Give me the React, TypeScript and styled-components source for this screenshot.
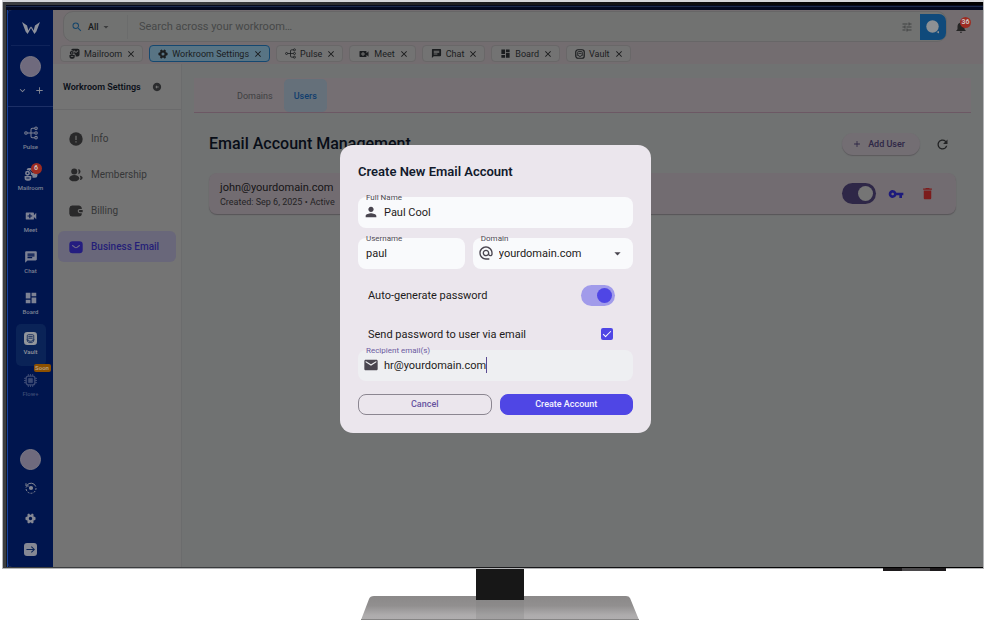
import React from "react";
import styled, { createGlobalStyle, css } from "styled-components";
import {
  MdSearch, MdArrowDropDown, MdTune, MdNotifications, MdClose, MdVideoCall, MdChat, MdDashboard,
  MdPerson, MdAlternateEmail, MdEmail, MdAdd, MdRefresh, MdVpnKey, MdDelete, MdKeyboardArrowDown,
  MdArrowCircleLeft,
} from "react-icons/md";

const GlobalStyle = createGlobalStyle`
  *, *::before, *::after { box-sizing: border-box; }
  body { margin: 0; background: #fff; font-family: Roboto, "Liberation Sans", sans-serif; }
  button, input, select { font-family: inherit; margin: 0; }
  button { cursor: pointer; border: 0; background: none; padding: 0; color: inherit; }
  svg { display: block; flex: none; }
  h1, h2, p { margin: 0; }
`;

/* ---------- icons ---------- */
type IconProps = { size: number };

const LogoMark = () => (
  <svg width="20" height="14" viewBox="0 0 20 14" fill="#8d919c">
    <path d="M1 1 L6 4.5 L7.4 9.6 L9.4 5.6 L10 7 L6.6 13 L4.6 10.4 Z" />
    <path d="M19 1 L14 4.5 L12.6 9.6 L10.6 5.6 L10 7 L13.4 13 L15.4 10.4 Z" />
  </svg>
);
const PulseIcon = ({ size }: IconProps) => (
  <svg width={size} height={size} viewBox="0 0 24 24" fill="none" stroke="currentColor" strokeWidth="1.8">
    <circle cx="3.4" cy="12" r="2.2" />
    <circle cx="20.6" cy="4" r="2.2" />
    <circle cx="20.6" cy="12" r="2.2" />
    <circle cx="20.6" cy="20" r="2.2" />
    <path d="M5.6 12H18.4M18.4 4H14.5Q12 4 12 6.5V17.5Q12 20 14.5 20H18.4" />
  </svg>
);
const MailroomIcon = ({ size }: IconProps) => (
  <svg width={size} height={size} viewBox="0 0 24 24" fill="currentColor">
    <path
      fillRule="evenodd"
      d="M8 1.500H19a4 4 0 0 1 4 4V14.500a4 4 0 0 1-4 4H14.500V16Q14.500 13.500 12 13.500H11.500Q13 8 7.500 5.500L4.500 5Q5 1.500 8 1.500ZM11 5L10 6.500L14 9.800Q15.300 10.800 16.600 9.800L20.500 6.500L19.500 5L15.800 8Q15.300 8.300 14.800 8Z"
    />
    <path fillRule="evenodd" d="M6 6.500A4.200 4.200 0 1 0 6 14.900A4.200 4.200 0 1 0 6 6.500ZM6 9.200A1.500 1.500 0 1 1 6 12.200A1.500 1.500 0 1 1 6 9.200Z" />
    <path fillRule="evenodd" d="M1 15.500H12.500V19a4.500 4.500 0 0 1-4.500 4.500H5.500A4.500 4.500 0 0 1 1 19ZM4 18V19.600H9.500V18Z" />
  </svg>
);
const GearIcon = ({ size }: IconProps) => (
  <svg width={size} height={size} viewBox="0 0 24 24" fill="currentColor" fillRule="evenodd">
    <path d="M7.500 1.500Q9.300 .8 10.300 3Q12 4.600 13.700 3Q14.700 .8 16.500 1.500L18.300 2.700Q19.600 4 18.300 6Q18 8 20.400 8.300Q22.800 8.300 23 10.300V13.700Q22.800 15.700 20.400 15.700Q18 16 18.300 18Q19.600 20 18.300 21.300L16.500 22.500Q14.700 23.200 13.700 21Q12 19.400 10.300 21Q9.300 23.200 7.500 22.500L5.700 21.300Q4.400 20 5.700 18Q6 16 3.600 15.700Q1.200 15.700 1 13.700V10.300Q1.200 8.300 3.600 8.300Q6 8 5.700 6Q4.400 4 5.700 2.700ZM12 8.300A3.700 3.700 0 1 0 12 15.700A3.700 3.700 0 1 0 12 8.300Z" />
  </svg>
);
const VaultIcon = ({ size }: IconProps) => (
  <svg width={size} height={size} viewBox="0 0 24 24" fill="none" stroke="currentColor" strokeWidth="2.8">
    <rect x="1.800" y="1.800" width="20.400" height="20.400" rx="5.500" />
    <path d="M6.500 14V8Q6.500 6 8.500 6H15.500Q17.500 6 17.500 8V14M8.500 10.500H15.500M4 14.800H8L9.500 17.500H14.500L16 14.800H20" strokeWidth="2" />
  </svg>
);
const VaultSolidIcon = ({ size }: IconProps) => (
  <svg width={size} height={size} viewBox="0 0 24 24" fill="none">
    <rect width="24" height="24" rx="6" fill="currentColor" />
    <path d="M6 14V7Q6 5 8 5H16Q18 5 18 7V14M8 8.500H16M8 11.500H16M4.500 14.500H8L9.500 17H14.500L16 14.500H19.500M6.500 15V17.500L9.500 19.500H14.500L17.500 17.500V15" stroke="#0a2355" strokeWidth="1.500" />
  </svg>
);
const ChipIcon = ({ size }: IconProps) => (
  <svg width={size} height={size} viewBox="0 0 24 24" fill="none" stroke="currentColor">
    <rect x="4" y="4" width="16" height="16" rx="4" strokeWidth="2.600" />
    <rect x="8" y="8" width="8" height="8" rx="1" fill="currentColor" />
    <path d="M8 0V4M12 0V4M16 0V4M8 20V24M12 20V24M16 20V24M0 8H4M0 12H4M0 16H4M20 8H24M20 12H24M20 16H24" strokeWidth="1.800" />
  </svg>
);
const HistoryIcon = ({ size }: IconProps) => (
  <svg width={size} height={size} viewBox="0 0 24 24" fill="none" stroke="currentColor" strokeWidth="2">
    <path d="M4 6.500A10 10 0 0 1 21.500 9" />
    <path d="M22 12A10 10 0 1 1 2.500 9.500" strokeDasharray="3.800 2.600" />
    <path d="M2 2.500V8H7.500" />
    <circle cx="12" cy="12" r="4.200" fill="currentColor" stroke="none" />
  </svg>
);
const LogoutIcon = ({ size }: IconProps) => (
  <svg width={size} height={size} viewBox="0 0 24 24" fill="none">
    <rect width="24" height="24" rx="5.500" fill="currentColor" />
    <path d="M4.500 12H19M13.500 6.500L19 12L13.500 17.500" stroke="#0a2355" strokeWidth="1.900" />
  </svg>
);
const InfoIcon = ({ size }: IconProps) => (
  <svg width={size} height={size} viewBox="0 0 24 24">
    <circle cx="12" cy="12" r="11.500" fill="currentColor" />
    <path d="M12 6.500V13.500M12 16V18" stroke="#747474" strokeWidth="2" />
  </svg>
);
const UsersIcon = ({ size }: IconProps) => (
  <svg width={size} height={size} viewBox="0 0 24 24" fill="currentColor">
    <circle cx="9" cy="6" r="5.200" />
    <ellipse cx="9" cy="17.500" rx="8.500" ry="5.300" />
    <path d="M15.800 1.500A4.700 4.700 0 0 1 15.800 10.800Q17.200 6 15.800 1.500ZM18.500 12.700Q23.500 13.800 23.500 16.800T18.500 20.800Q20.600 16.500 18.500 12.700Z" />
  </svg>
);
const WalletIcon = ({ size }: IconProps) => (
  <svg width={size} height={size} viewBox="0 0 24 24" fill="currentColor">
    <path d="M5.500 2.500H16.500A5.500 5.500 0 0 1 22 8.500H18.500A3.600 3.600 0 0 0 18.500 15.800H22A5.500 5.500 0 0 1 16.500 21.500H5.500A5.500 5.500 0 0 1 .5 16.500V7.500A5.500 5.500 0 0 1 5.500 2.500Z" />
    <path d="M18.600 10.200H23.500V14H18.600A1.900 1.900 0 0 1 18.600 10.200Z" />
  </svg>
);
const EnvelopeIcon = ({ size }: IconProps) => (
  <svg width={size} height={size} viewBox="0 0 24 24" fill="none">
    <rect x=".5" y="2" width="23" height="20.500" rx="5.500" fill="currentColor" />
    <path d="M6 9.500L10 12.500Q12 13.800 14 12.500L18 9.500" stroke="#6d6a86" strokeWidth="1.800" strokeLinecap="round" />
  </svg>
);
const AssistIcon = () => (
  <svg width="14" height="14" viewBox="0 0 14 14">
    <circle cx="6.500" cy="6.500" r="6.200" fill="#8d9094" />
    <path d="M10.500 12L13 11V13.400Z" fill="#8d9094" />
  </svg>
);

/* ---------- monitor ---------- */
const Page = styled.div`
  min-height: 100vh;
  display: flex;
  flex-direction: column;
`;
const Monitor = styled.div`
  position: relative;
  margin: 0 16px 0 2px;
  padding: 0 1px 1px;
  background: linear-gradient(#d5d6d9 0 2px, #b4b5b7 2px);
`;
const Bezel = styled.div`
  margin-top: 2px;
  padding: 3px 0 1px 3px;
  background: linear-gradient(90deg, #3b3d3f 0%, #3b3d3f 20%, #1b1b1d 50%, #000 90%);
`;
const Rim = styled.div`
  padding: 5px 0 0 2px;
  background:
    linear-gradient(#050a1c 0 1px, #1c2a4d 1px 2px, #040a20 2px 5px, transparent 5px),
    linear-gradient(90deg, #171a20 0 1px, #17419b 1px 2px, #00154c 2px 20px, #717171 30px);
`;
const Screen = styled.div`
  position: relative;
  display: flex;
  min-height: calc(100vh - 63px);
  background: #707272;
  border-radius: 4px 4px 6px 4px;
  overflow: hidden;
`;
const StandBadge = styled.div`
  position: absolute;
  right: 38px;
  bottom: -2px;
  width: 63px;
  height: 3px;
  background: linear-gradient(90deg, #1d1a1c 0 30%, #4b494b 30% 75%, #1d1a1c 75%);
`;
const Stand = styled.svg`
  align-self: center;
`;

/* ---------- rail ---------- */
const Rail = styled.aside`
  flex: none;
  width: 45px;
  display: flex;
  flex-direction: column;
  align-items: center;
  background: #00154e;
  color: #858894;
`;
const RailHead = styled.div`
  width: 39px;
  height: 36px;
  display: flex;
  align-items: center;
  justify-content: center;
  border-bottom: 1px solid #0f235a;
`;
const RailWorkspace = styled.div`
  width: 100%;
  height: 61px;
  padding-top: 10px;
  display: flex;
  flex-direction: column;
  align-items: center;
  gap: 8px;
  border-bottom: 1px solid #1c2f66;
`;
const Avatar = styled.span`
  width: 21px;
  height: 21px;
  border-radius: 50%;
  background: #6f6a7d;
  border: 1px solid #7c7985;
`;
const RailActions = styled.div`
  display: flex;
  gap: 6px;
`;
const RailNav = styled.nav`
  width: 30px;
  height: 289px;
  margin-top: 11px;
  display: grid;
  grid-template-rows: repeat(7, 1fr);
`;
const RailItem = styled.button<{ $active?: boolean; $dim?: boolean }>`
  position: relative;
  display: flex;
  flex-direction: column;
  align-items: center;
  padding-top: 8px;
  gap: 3px;
  border-radius: 5px;
  font-size: 6px;
  line-height: 8px;
  font-weight: 500;
  color: ${(p) => (p.$dim ? "#3c4a74" : p.$active ? "#92969c" : "#7d8294")};
  background: ${(p) => (p.$active ? "#0a2357" : "transparent")};
`;
const CountBadge = styled.span<{ $top: number; $right: number }>`
  position: absolute;
  top: ${(p) => p.$top}px;
  right: ${(p) => p.$right}px;
  width: 11px;
  height: 11px;
  border-radius: 50%;
  background: #9d2c22;
  color: #cdc0c0;
  font-size: 7px;
  line-height: 11px;
  font-weight: 700;
  text-align: center;
`;
const SoonBadge = styled.span`
  position: absolute;
  top: -2px;
  right: -5px;
  width: 17px;
  height: 8px;
  border-radius: 2px;
  background: #8d5000;
  color: #b7a78e;
  font-size: 6px;
  line-height: 8px;
`;
const RailFoot = styled.div`
  margin-top: auto;
  padding-bottom: 11px;
  display: flex;
  flex-direction: column;
  align-items: center;
  gap: 19px;
  & > span { margin-bottom: -7px; }
`;

/* ---------- top bar ---------- */
const Main = styled.main`
  flex: 1;
  min-width: 0;
  display: flex;
  flex-direction: column;
`;
const TopBar = styled.header`
  padding: 1px 15px 0 10px;
  display: flex;
  align-items: center;
  gap: 7px;
  background: #736d70;
`;
const SearchBox = styled.form`
  flex: 1;
  height: 31px;
  padding: 0 0 0 7px;
  display: flex;
  align-items: center;
  background: #717271;
  border: 1px solid #676667;
  border-radius: 10px;
  color: #15456b;
`;
const ScopeButton = styled.button`
  height: 24px;
  width: 40px;
  margin-left: 5px;
  display: flex;
  align-items: center;
  gap: 1px;
  border-right: 1px solid #6b6c6c;
  color: #181a1c;
  font-size: 9px;
  font-weight: 500;
  svg { color: #3b3c3d; }
`;
const SearchInput = styled.input`
  flex: 1;
  min-width: 0;
  padding: 0 0 0 11px;
  border: 0;
  outline: 0;
  background: transparent;
  font-size: 11px;
  color: #222;
  &::placeholder { color: #464848; opacity: 1; }
`;
const TuneButton = styled.button`
  margin-right: 7px;
  color: #414243;
`;
const AssistButton = styled.button`
  width: 26px;
  height: 26px;
  display: grid;
  place-items: center;
  background: #104a7b;
  border-radius: 0 7px 7px 0;
`;
const BellButton = styled.button`
  position: relative;
  color: #252525;
`;
const OpenTabs = styled.div`
  height: 22px;
  padding: 3px 7px;
  display: flex;
  gap: 6px;
  background: #736d70;
`;
const OpenTab = styled.div<{ $active?: boolean }>`
  height: 17px;
  padding: 0 6px 0 8px;
  display: flex;
  align-items: center;
  gap: 4px;
  font-size: 9px;
  border-radius: 4px;
  border: 1px solid ${(p) => (p.$active ? "#154870" : "#696768")};
  background: ${(p) => (p.$active ? "#587484" : "#737373")};
  color: #1b1d1f;
`;
const TabClose = styled.button`
  color: #171819;
`;

/* ---------- settings menu ---------- */
const Body = styled.div`
  flex: 1;
  display: flex;
`;
const Menu = styled.section`
  flex: none;
  width: 129px;
  background: #747474;
  border-right: 1px solid #6b6c6d;
`;
const MenuHead = styled.div`
  height: 46px;
  padding-left: 10px;
  display: flex;
  align-items: center;
  gap: 11px;
  border-bottom: 1px solid #6a6a6b;
  color: #2b2c2e;
  h2 { font-size: 9px; font-weight: 600; color: #0b1019; }
`;
const MenuList = styled.nav`
  padding: 13px 5px;
  display: flex;
  flex-direction: column;
  gap: 5px;
`;
const MenuItem = styled.a<{ $active?: boolean }>`
  height: 31px;
  padding-left: 11px;
  display: flex;
  align-items: center;
  gap: 8px;
  border-radius: 6px;
  font-size: 10px;
  text-decoration: none;
  color: #363738;
  svg { color: #29292a; }
  ${(p) => p.$active && css`
    font-weight: 500;
    background: #69677a;
    color: #251f78;
    svg { color: #241d80; }
  `}
`;

/* ---------- content ---------- */
const Content = styled.section`
  flex: 1;
  min-width: 0;
  padding: 14px 12px;
`;
const SectionTabs = styled.div`
  height: 35px;
  padding: 1px 0 0 32px;
  display: flex;
  background: #756f73;
  border-bottom: 1px solid #6c5864;
`;
const SectionTab = styled.button<{ $active?: boolean }>`
  padding: 0 ${(p) => (p.$active ? 10 : 11)}px;
  font-size: 9px;
  border-radius: 5px;
  color: ${(p) => (p.$active ? "#113e6e" : "#3f4042")};
  background: ${(p) => (p.$active ? "#65707a" : "transparent")};
  font-weight: ${(p) => (p.$active ? 500 : 400)};
`;
const HeadingRow = styled.div`
  margin: 20px 21px 0 15px;
  height: 22px;
  display: flex;
  align-items: center;
  gap: 15px;
  color: #222324;
  h1 { flex: 1; font-size: 16px; line-height: 20px; font-weight: 500; color: #080d17; }
`;
const AddButton = styled.button`
  height: 22px;
  padding: 0 15px 0 10px;
  display: flex;
  align-items: center;
  gap: 6px;
  border-radius: 11px;
  background: #736e73;
  box-shadow: 0 1px 1px #5c5a5d;
  color: #2e2746;
  font-size: 9px;
  font-weight: 500;
`;
const AccountCard = styled.article`
  margin: 18px 15px 0;
  height: 41px;
  padding: 0 21px 0 11px;
  display: flex;
  align-items: center;
  border-radius: 8px;
  background: #726c71;
  box-shadow: 0 1px 1px #575558;
`;
const AccountText = styled.div`
  flex: 1;
  padding-top: 3px;
  font-size: 9px;
  line-height: 14px;
  color: #242325;
  strong { display: block; font-size: 11px; font-weight: 400; color: #151416; }
`;
const IconButton = styled.button<{ $color: string; $gap: number }>`
  color: ${(p) => p.$color};
  margin-left: ${(p) => p.$gap}px;
`;
const Switch = styled.input<{ $track: string; $knob: string }>`
  appearance: none;
  margin: 0;
  width: 34px;
  height: 21px;
  padding: 3px;
  border-radius: 11px;
  background: ${(p) => p.$track};
  display: flex;
  justify-content: flex-end;
  &::before {
    content: "";
    width: 15px;
    height: 15px;
    border-radius: 50%;
    background: ${(p) => p.$knob};
  }
`;

/* ---------- dialog ---------- */
const Overlay = styled.div`
  position: absolute;
  inset: 0;
  display: grid;
  place-items: center;
`;
const Dialog = styled.form`
  width: 311px;
  padding: 18px;
  border-radius: 13px;
  background: #ebe6ed;
  color: #1d1b20;
  h2 { font-size: 13px; line-height: 18px; font-weight: 600; color: #121a2c; }
`;
const FieldRow = styled.div<{ $top: number }>`
  display: grid;
  grid-template-columns: 2fr 3fr;
  gap: 8px;
  margin-top: ${(p) => p.$top}px;
`;
const Field = styled.div<{ $wide?: boolean; $focus?: boolean; $plain?: boolean }>`
  position: relative;
  ${(p) => p.$wide && "grid-column: 1 / -1;"}
  height: 31px;
  padding: 0 8px 0 ${(p) => (p.$plain ? 8 : 5)}px;
  display: flex;
  align-items: center;
  gap: 5px;
  border-radius: 8px;
  background: ${(p) => (p.$focus ? "#eeeff2" : "#f9fafc")};
  color: #49454f;
  label {
    position: absolute;
    top: -4px;
    left: 8px;
    font-size: 8px;
    line-height: 10px;
    color: ${(p) => (p.$focus ? "#6b5aa0" : "#4d4953")};
  }
  input, select {
    min-width: 0;
    padding: 0;
    border: 0;
    outline: 0;
    appearance: none;
    background: transparent;
    font-size: 11px;
    color: #1d1b20;
  }
  input { field-sizing: content; }
  select { flex: 1; }
`;
const Caret = styled.span`
  width: 1px;
  height: 16px;
  margin-left: -5px;
  background: #5a4a92;
`;
const OptionRow = styled.label<{ $top: number }>`
  height: 21px;
  margin: ${(p) => p.$top}px 18px 0 10px;
  display: flex;
  align-items: center;
  justify-content: space-between;
  font-size: 11px;
`;
const Tick = styled.input`
  appearance: none;
  width: 12px;
  height: 12px;
  margin-right: 2px;
  border-radius: 2px;
  background: #4f46e5;
  display: grid;
  place-items: center;
  &::before {
    content: "";
    width: 8px;
    height: 4px;
    border: solid #fff;
    border-width: 0 0 1px 1px;
    transform: translateY(-1px) rotate(-45deg);
  }
`;
const Actions = styled.div`
  margin-top: 13px;
  display: grid;
  grid-template-columns: 1fr 1fr;
  gap: 8px;
`;
const ActionButton = styled.button<{ $primary?: boolean }>`
  height: 21px;
  border-radius: 8px;
  font-size: 9px;
  font-weight: 500;
  border: 1px solid ${(p) => (p.$primary ? "#4f46e5" : "#8b8691")};
  background: ${(p) => (p.$primary ? "#4f46e5" : "transparent")};
  color: ${(p) => (p.$primary ? "#f4f3ff" : "#6754a0")};
`;

/* ---------- data ---------- */
const railItems = [
  { label: "Pulse", icon: <PulseIcon size={14} /> },
  { label: "Mailroom", icon: <MailroomIcon size={14} />, count: 6 },
  { label: "Meet", icon: <MdVideoCall size={14} /> },
  { label: "Chat", icon: <MdChat size={14} /> },
  { label: "Board", icon: <MdDashboard size={14} /> },
  { label: "Vault", icon: <VaultSolidIcon size={13} />, active: true },
  { label: "Flow+", icon: <ChipIcon size={13} />, soon: true },
];
const openTabs = [
  { label: "Mailroom", icon: <MailroomIcon size={11} /> },
  { label: "Workroom Settings", icon: <GearIcon size={10} />, active: true },
  { label: "Pulse", icon: <PulseIcon size={11} /> },
  { label: "Meet", icon: <MdVideoCall size={12} /> },
  { label: "Chat", icon: <MdChat size={11} /> },
  { label: "Board", icon: <MdDashboard size={11} /> },
  { label: "Vault", icon: <VaultIcon size={10} /> },
];
const menuItems = [
  { label: "Info", icon: <InfoIcon size={14} /> },
  { label: "Membership", icon: <UsersIcon size={14} /> },
  { label: "Billing", icon: <WalletIcon size={14} /> },
  { label: "Business Email", icon: <EnvelopeIcon size={14} />, active: true },
];

export default function App() {
  return (
    <Page>
      <GlobalStyle />
      <Monitor>
        <Bezel>
          <Rim>
            <Screen>
              <Rail>
                <RailHead><LogoMark /></RailHead>
                <RailWorkspace>
                  <Avatar />
                  <RailActions>
                    <button aria-label="Switch workroom"><MdKeyboardArrowDown size={11} /></button>
                    <button aria-label="Add workroom"><MdAdd size={11} /></button>
                  </RailActions>
                </RailWorkspace>
                <RailNav>
                  {railItems.map((item) => (
                    <RailItem key={item.label} $active={item.active} $dim={item.soon}>
                      {item.icon}
                      {item.label}
                      {item.count && <CountBadge $top={4} $right={4}>{item.count}</CountBadge>}
                      {item.soon && <SoonBadge>Soon</SoonBadge>}
                    </RailItem>
                  ))}
                </RailNav>
                <RailFoot>
                  <Avatar />
                  <button aria-label="History"><HistoryIcon size={12} /></button>
                  <button aria-label="Settings"><GearIcon size={11} /></button>
                  <button aria-label="Log out"><LogoutIcon size={13} /></button>
                </RailFoot>
              </Rail>
              <Main>
                <TopBar>
                  <SearchBox>
                    <MdSearch size={12} />
                    <ScopeButton type="button">All<MdArrowDropDown size={12} /></ScopeButton>
                    <SearchInput aria-label="Search" placeholder="Search across your workroom…" />
                    <TuneButton type="button" aria-label="Filters"><MdTune size={12} /></TuneButton>
                    <AssistButton type="button" aria-label="Assistant"><AssistIcon /></AssistButton>
                  </SearchBox>
                  <BellButton aria-label="Notifications">
                    <MdNotifications size={14} />
                    <CountBadge $top={-3} $right={-3}>36</CountBadge>
                  </BellButton>
                </TopBar>
                <OpenTabs>
                  {openTabs.map((tab) => (
                    <OpenTab key={tab.label} $active={tab.active}>
                      {tab.icon}
                      {tab.label}
                      <TabClose aria-label={`Close ${tab.label}`}><MdClose size={10} /></TabClose>
                    </OpenTab>
                  ))}
                </OpenTabs>
                <Body>
                  <Menu>
                    <MenuHead>
                      <h2>Workroom Settings</h2>
                      <MdArrowCircleLeft size={10} />
                    </MenuHead>
                    <MenuList>
                      {menuItems.map((item) => (
                        <MenuItem key={item.label} href="#" $active={item.active}>
                          {item.icon}
                          {item.label}
                        </MenuItem>
                      ))}
                    </MenuList>
                  </Menu>
                  <Content>
                    <SectionTabs>
                      <SectionTab>Domains</SectionTab>
                      <SectionTab $active>Users</SectionTab>
                    </SectionTabs>
                    <HeadingRow>
                      <h1>Email Account Management</h1>
                      <AddButton><MdAdd size={10} />Add User</AddButton>
                      <button aria-label="Refresh"><MdRefresh size={15} /></button>
                    </HeadingRow>
                    <AccountCard>
                      <AccountText>
                        <strong>john@yourdomain.com</strong>
                        Created: Sep 6, 2025 • Active
                      </AccountText>
                      <Switch type="checkbox" defaultChecked aria-label="Account active" $track="#2e2747" $knob="#757575" />
                      <IconButton aria-label="Change password" $color="#1d1a7c" $gap={12}><MdVpnKey size={16} /></IconButton>
                      <IconButton aria-label="Delete account" $color="#7c1c1c" $gap={16}><MdDelete size={15} /></IconButton>
                    </AccountCard>
                  </Content>
                </Body>
              </Main>
              <Overlay>
                <Dialog onSubmit={(e) => e.preventDefault()}>
                  <h2>Create New Email Account</h2>
                  <FieldRow $top={16}>
                    <Field $wide>
                      <label htmlFor="name">Full Name</label>
                      <MdPerson size={16} />
                      <input id="name" defaultValue="Paul Cool" />
                    </Field>
                  </FieldRow>
                  <FieldRow $top={10}>
                    <Field $plain>
                      <label htmlFor="user">Username</label>
                      <input id="user" defaultValue="paul" />
                    </Field>
                    <Field>
                      <label htmlFor="domain">Domain</label>
                      <MdAlternateEmail size={16} />
                      <select id="domain"><option>yourdomain.com</option></select>
                      <MdArrowDropDown size={15} />
                    </Field>
                  </FieldRow>
                  <OptionRow $top={16}>
                    Auto-generate password
                    <Switch type="checkbox" defaultChecked $track="#a19bea" $knob="#4f46e5" />
                  </OptionRow>
                  <OptionRow $top={18}>
                    Send password to user via email
                    <Tick type="checkbox" defaultChecked />
                  </OptionRow>
                  <FieldRow $top={5}>
                    <Field $wide $focus>
                      <label htmlFor="recipient">Recipient email(s)</label>
                      <MdEmail size={16} />
                      <input id="recipient" defaultValue="hr@yourdomain.com" />
                      <Caret />
                    </Field>
                  </FieldRow>
                  <Actions>
                    <ActionButton type="button">Cancel</ActionButton>
                    <ActionButton type="submit" $primary>Create Account</ActionButton>
                  </Actions>
                </Dialog>
              </Overlay>
            </Screen>
          </Rim>
        </Bezel>
        <StandBadge />
      </Monitor>
      <Stand width="278" height="51" viewBox="0 0 278 51">
        <defs>
          <linearGradient id="base" x1="0" y1="0" x2="0" y2="1">
            <stop offset="0" stopColor="#8b8989" />
            <stop offset=".4" stopColor="#918f8f" />
            <stop offset=".8" stopColor="#aeacad" />
            <stop offset="1" stopColor="#b0aeaf" />
          </linearGradient>
        </defs>
        <path d="M13 27H265Q268 27 269 29L278 51H0L8 30Q9 27 13 27Z" fill="url(#base)" />
        <path d="M115 31H163V51H115Z" fill="#7d7b7b" opacity=".25" />
        <path d="M115 0H163V31H115Z" fill="#171717" />
        <path d="M0 50H278V51H0Z" fill="#858484" />
      </Stand>
    </Page>
  );
}
